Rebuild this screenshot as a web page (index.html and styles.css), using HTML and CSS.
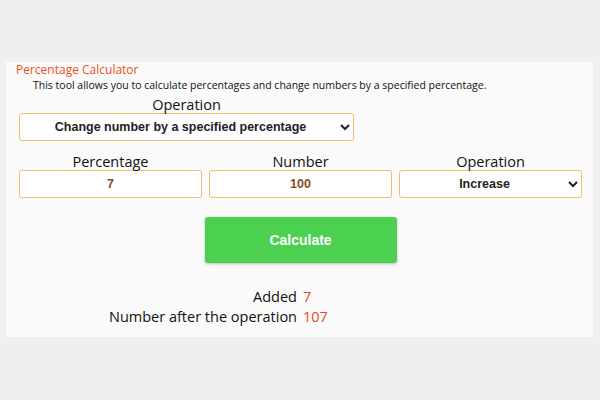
FILE: index.html
```html
<!DOCTYPE html>
<html lang="en">
<head>
    <meta charset="UTF-8">
    <meta name="viewport" content="width=device-width, initial-scale=1.0">
    <title>Percentage Calculator</title>
    <link rel="stylesheet" href="styles.css">
</head>
<body>
    <div class="calculator">
        <h1 class="title">Percentage Calculator</h1>
        <p class="intro">This tool allows you to calculate percentages and change numbers by a specified percentage.</p>

        <div class="mode">
            <label for="mode">Operation</label>
            <select id="mode" class="field">
                <option>Change number by a specified percentage</option>
            </select>
        </div>

        <div class="inputs">
            <div class="group">
                <label for="percent">Percentage</label>
                <input type="text" id="percent" class="field value" value="7">
            </div>
            <div class="group">
                <label for="number">Number</label>
                <input type="text" id="number" class="field value" value="100">
            </div>
            <div class="group">
                <label for="direction">Operation</label>
                <select id="direction" class="field">
                    <option>Increase</option>
                </select>
            </div>
        </div>

        <div class="actions">
            <button type="button" class="calc-btn">Calculate</button>
        </div>

        <div class="results">
            <span class="label">Added</span><span class="num">7</span>
            <span class="label">Number after the operation</span><span class="num">107</span>
        </div>
    </div>
</body>
</html>
```

FILE: styles.css
```css
body {
    margin: 0;
    padding: 62px 0 0;
    background: #efefef;
    font-family: "Comic Sans MS", "Open Sans", sans-serif;
    color: #111;
}
.calculator {
    margin: 0 7px 0 6px;
    padding: 0 11px 10px 13px;
    background: #fafafa;
}
.title {
    margin: 0 0 0 -3px;
    font-size: 12px;
    font-weight: normal;
    color: #f0501e;
    line-height: 16px;
}
.intro {
    margin: 0 0 0 14px;
    font-size: 10.5px;
    line-height: 14px;
}
.mode {
    width: 335px;
    margin-top: 4px;
    text-align: center;
}
label {
    display: block;
    font-size: 14.5px;
    line-height: 17px;
    text-align: center;
}
.field {
    display: block;
    width: 100%;
    height: 28px;
    box-sizing: border-box;
    margin: 0;
    border: 1px solid #f1c066;
    border-radius: 3px;
    background: #fff;
    font-family: "Liberation Sans", Arial, sans-serif;
    font-size: 12.5px;
    font-weight: bold;
    color: #222;
    text-align: center;
    text-align-last: center;
}
.field.value {
    color: #8b4a1e;
}
.inputs {
    display: grid;
    grid-template-columns: repeat(3, 1fr);
    gap: 7px;
    margin-top: 12px;
}
.actions {
    display: flex;
    justify-content: center;
    margin-top: 19px;
}
.calc-btn {
    width: 192px;
    height: 46px;
    border: none;
    border-radius: 3px;
    background: #4cd04f;
    box-shadow: 0 1px 3px rgba(0, 0, 0, 0.25);
    color: #fff;
    font-family: "Liberation Sans", Arial, sans-serif;
    font-size: 14px;
    font-weight: bold;
}
.results {
    display: grid;
    grid-template-columns: 278px auto;
    column-gap: 6px;
    margin-top: 24px;
    font-size: 14.5px;
    line-height: 20px;
}
.results .label {
    text-align: right;
}
.results .num {
    color: #ea4a1f;
}
```
